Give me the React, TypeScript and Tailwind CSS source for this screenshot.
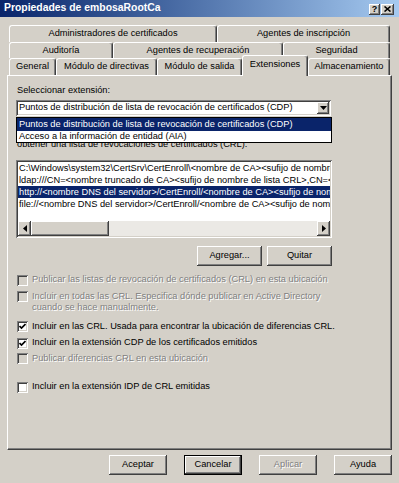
import React from "react";

const raised =
  "shadow-[inset_-1px_-1px_0_#404040,inset_1px_1px_0_#ffffff,inset_-2px_-2px_0_#808080]";
const sunken =
  "shadow-[inset_1px_1px_0_#808080,inset_-1px_-1px_0_#ffffff,inset_2px_2px_0_#404040,inset_-2px_-2px_0_#d4d0c8]";
const disabledText = "text-[#808080] [text-shadow:1px_1px_0_#ffffff]";

function Tab({ label, className, active }: { label: string; className: string; active?: boolean }) {
  return (
    <div
      className={`${className} flex items-center justify-center rounded-t-[3px] border-t border-l border-r border-t-white border-l-white border-r-[#404040] shadow-[inset_-1px_0_0_#808080] whitespace-nowrap ${
        active ? "relative z-10 h-[21px] -mb-[1px] bg-[#d4d0c8] pb-[2px]" : "h-full"
      }`}
    >
      {label}
    </div>
  );
}

function Check({ checked, disabled }: { checked?: boolean; disabled?: boolean }) {
  return (
    <span
      className={`relative w-[11px] h-[11px] shrink-0 ${disabled ? "bg-[#d4d0c8]" : "bg-white"} ${sunken}`}
    >
      {checked && (
        <svg className="absolute left-[2px] top-[2px]" width="7" height="7" viewBox="0 0 7 7">
          <path d="M0.5 3 L2.5 5 L6.5 1" stroke="#000" strokeWidth="1.7" fill="none" />
        </svg>
      )}
    </span>
  );
}

function CheckRow({
  children,
  checked,
  disabled,
  className,
}: {
  children: React.ReactNode;
  checked?: boolean;
  disabled?: boolean;
  className: string;
}) {
  return (
    <div className={`flex items-start gap-[4px] ml-[1px] leading-[11.5px] ${className}`}>
      <span className="mt-[0.5px] flex">
        <Check checked={checked} disabled={disabled} />
      </span>
      <span className={disabled ? disabledText : "text-black"}>{children}</span>
    </div>
  );
}

function Button({
  label,
  className,
  disabled,
  isDefault,
}: {
  label: string;
  className: string;
  disabled?: boolean;
  isDefault?: boolean;
}) {
  return (
    <div
      className={`${className} flex items-center justify-center bg-[#d4d0c8] ${
        isDefault
          ? "border border-black shadow-[inset_-1px_-1px_0_#404040,inset_1px_1px_0_#ffffff,inset_-2px_-2px_0_#808080]"
          : raised
      } ${disabled ? disabledText : "text-black"}`}
    >
      {label}
    </div>
  );
}

function Arrow({ dir }: { dir: "down" | "left" | "right" }) {
  if (dir === "down")
    return (
      <svg width="7" height="4" viewBox="0 0 7 4">
        <path d="M0 0 H7 L3.5 4 Z" fill="#000" />
      </svg>
    );
  if (dir === "left")
    return (
      <svg width="4" height="7" viewBox="0 0 4 7">
        <path d="M4 0 V7 L0 3.5 Z" fill="#000" />
      </svg>
    );
  return (
    <svg width="4" height="7" viewBox="0 0 4 7">
      <path d="M0 0 V7 L4 3.5 Z" fill="#000" />
    </svg>
  );
}

const urls = [
  "C:\\Windows\\system32\\CertSrv\\CertEnroll\\<nombre de CA><sufijo de nombre de lista CRL><diferencias de lista CRL permitidas>.crl",
  "ldap:///CN=<nombre truncado de CA><sufijo de nombre de lista CRL>,CN=<nombre corto del servidor>,CN=CDP",
  "http://<nombre DNS del servidor>/CertEnroll/<nombre de CA><sufijo de nombre de lista CRL>.crl",
  "file://<nombre DNS del servidor>/CertEnroll/<nombre de CA><sufijo de nombre de lista CRL>.crl",
];

export default function App() {
  return (
    <div className="w-[399px] h-[483px] overflow-hidden bg-[#d4d0c8] text-[9.25px] text-black font-['Liberation_Sans',Arial,sans-serif] flex flex-col">
      {/* title bar */}
      <div className="h-[17px] shrink-0 flex items-center bg-gradient-to-r from-[#0a246a] to-[#a6caf0] pl-[4px] pr-[5px]">
        <span className="text-white font-bold text-[10.4px] leading-none flex-1 whitespace-nowrap">
          Propiedades de embosaRootCa
        </span>
        <div className="flex gap-[1px] mt-[1px]">
          <div className={`w-[11px] h-[11px] bg-[#d4d0c8] ${raised} flex items-center justify-center font-bold text-[9px] leading-none`}>
            ?
          </div>
          <div className={`w-[13px] h-[11px] bg-[#d4d0c8] ${raised} flex items-center justify-center`}>
            <svg width="7" height="6" viewBox="0 0 7 6">
              <path d="M0.5 0.5 L6.5 5.5 M6.5 0.5 L0.5 5.5" stroke="#000" strokeWidth="1.6" />
            </svg>
          </div>
        </div>
      </div>

      {/* tabs */}
      <div className="mt-[8px] ml-[9px] w-[381px] flex flex-col">
        <div className="h-[17px] flex">
          <Tab label="Administradores de certificados" className="w-[208px]" />
          <Tab label="Agentes de inscripción" className="w-[173px]" />
        </div>
        <div className="h-[16px] flex">
          <Tab label="Auditoría" className="w-[104px]" />
          <Tab label="Agentes de recuperación" className="w-[170px]" />
          <Tab label="Seguridad" className="w-[107px]" />
        </div>
        <div className="h-[17px] flex items-end">
          <Tab label="General" className="w-[47px]" />
          <Tab label="Módulo de directivas" className="w-[101px]" />
          <Tab label="Módulo de salida" className="w-[85px]" />
          <Tab label="Extensiones" className="w-[66px]" active />
          <Tab label="Almacenamiento" className="w-[82px]" />
        </div>
      </div>

      {/* panel */}
      <div className="relative ml-[7px] w-[385px] h-[375px] shrink-0 border-t border-l border-white border-r border-b border-r-[#404040] border-b-[#404040] shadow-[inset_-1px_-1px_0_#808080] px-[8px] pt-[8px] flex flex-col">
        <div className="ml-[1px] leading-[12px]">Seleccionar extensión:</div>

        {/* combo */}
        <div className={`mt-[4px] w-[315px] h-[16px] bg-white ${sunken} flex items-center pl-[3px] pr-[2px]`}>
          <span className="flex-1 whitespace-nowrap overflow-hidden">
            Puntos de distribución de lista de revocación de certificados (CDP)
          </span>
          <div className={`w-[12px] h-[12px] bg-[#d4d0c8] ${raised} flex items-center justify-center`}>
            <Arrow dir="down" />
          </div>
        </div>

        <div className="mt-[10px] ml-[1px] leading-[12px] whitespace-nowrap">
          Especifique las ubicaciones desde las que los usuarios pueden
          <br />
          obtener una lista de revocaciones de certificados (CRL).
        </div>

        {/* url list */}
        <div className={`mt-[10px] w-[316px] h-[78px] bg-white ${sunken} p-[2px] flex flex-col`}>
          <div className="flex-1 overflow-hidden">
            {urls.map((u, i) => (
              <div
                key={i}
                className={`h-[12px] leading-[12px] whitespace-nowrap pl-[1px] ${
                  i === 2 ? "bg-[#0a246a] text-white" : ""
                }`}
              >
                {u}
              </div>
            ))}
          </div>
          <div className="h-[15px] flex bg-[#ebe9e5]">
            <div className={`w-[13px] h-full bg-[#d4d0c8] ${raised} flex items-center justify-center`}>
              <Arrow dir="left" />
            </div>
            <div className={`w-[78px] h-full bg-[#d4d0c8] ${raised}`} />
            <div className="flex-1" />
            <div className={`w-[13px] h-full bg-[#d4d0c8] ${raised} flex items-center justify-center`}>
              <Arrow dir="right" />
            </div>
          </div>
        </div>

        <div className="mt-[8px] w-[316px] flex justify-end gap-[5px]">
          <Button label="Agregar..." className="w-[65px] h-[20px]" />
          <Button label="Quitar" className="w-[65px] h-[20px]" />
        </div>

        <CheckRow disabled className="mt-[8px]">
          Publicar las listas de revocación de certificados (CRL) en esta ubicación
        </CheckRow>
        <CheckRow disabled className="mt-[5px]">
          Incluir en todas las CRL. Especifica dónde publicar en Active Directory
          <br />
          cuando se hace manualmente.
        </CheckRow>
        <CheckRow checked className="mt-[7px]">
          Incluir en las CRL. Usada para encontrar la ubicación de diferencias CRL.
        </CheckRow>
        <CheckRow checked className="mt-[5px]">
          Incluir en la extensión CDP de los certificados emitidos
        </CheckRow>
        <CheckRow disabled className="mt-[4px]">
          Publicar diferencias CRL en esta ubicación
        </CheckRow>
        <CheckRow className="mt-[17px]">Incluir en la extensión IDP de CRL emitidas</CheckRow>

        {/* open dropdown list */}
        <div className="absolute left-[8px] top-[41px] w-[316px] h-[26px] bg-white border border-black flex flex-col">
          <div className="h-[13px] leading-[13px] bg-[#0a246a] text-white pl-[2px] whitespace-nowrap overflow-hidden">
            Puntos de distribución de lista de revocación de certificados (CDP)
          </div>
          <div className="h-[11px] leading-[11px] pl-[2px] whitespace-nowrap">
            Acceso a la información de entidad (AIA)
          </div>
        </div>
      </div>

      {/* bottom buttons */}
      <div className="mt-[5px] w-[392px] flex justify-end gap-[17px]">
        <Button label="Aceptar" className="w-[58px] h-[20px]" />
        <Button label="Cancelar" className="w-[58px] h-[20px]" isDefault />
        <Button label="Aplicar" className="w-[58px] h-[20px]" disabled />
        <Button label="Ayuda" className="w-[58px] h-[20px]" />
      </div>
    </div>
  );
}
